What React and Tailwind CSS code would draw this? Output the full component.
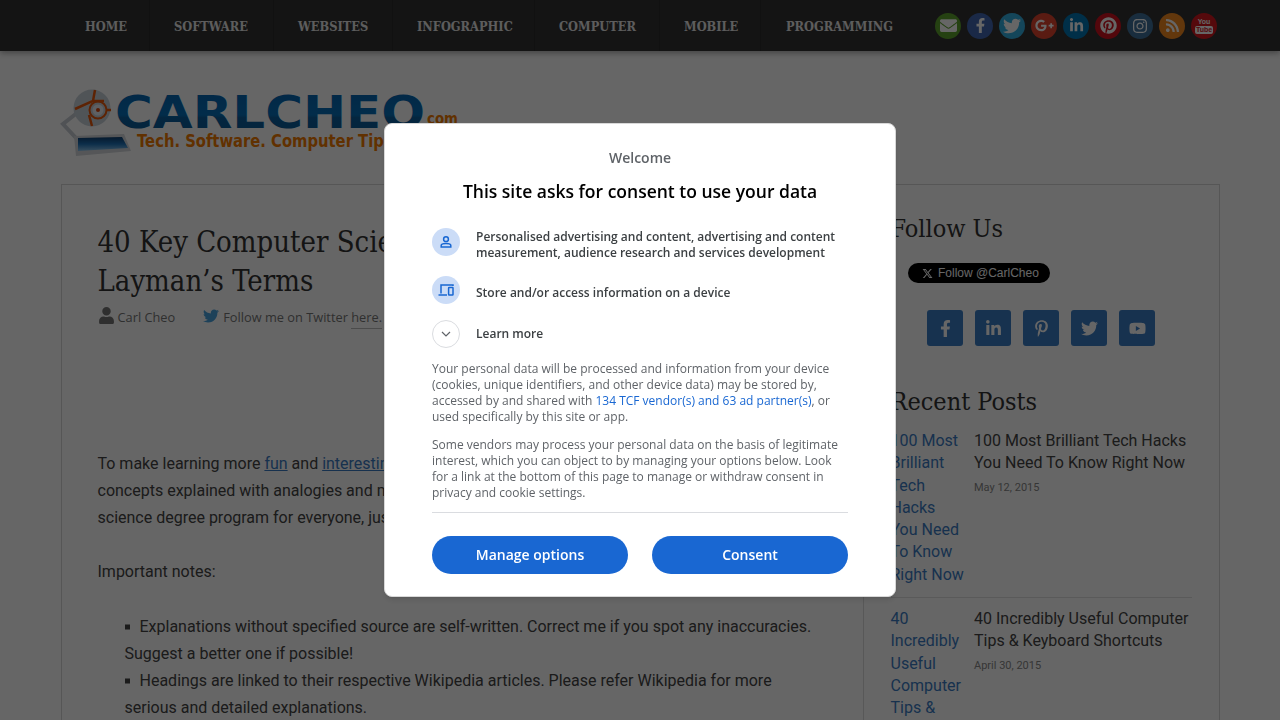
import {
  FaEnvelope,
  FaFacebookF,
  FaGooglePlusG,
  FaInstagram,
  FaLinkedinIn,
  FaPinterest,
  FaPinterestP,
  FaRss,
  FaTwitter,
  FaUser,
  FaYoutube,
} from 'react-icons/fa';
import { FaXTwitter } from 'react-icons/fa6';

const navItems = [
  { label: 'HOME', cls: 'w-[90px] pl-[25px]' },
  { label: 'SOFTWARE', cls: 'w-[124px] pl-[24px]' },
  { label: 'WEBSITES', cls: 'w-[119px] pl-[24px]' },
  { label: 'INFOGRAPHIC', cls: 'w-[142px] pl-[24px]' },
  { label: 'COMPUTER', cls: 'w-[125px] pl-[24px]' },
  { label: 'MOBILE', cls: 'w-[101px] pl-[24px]' },
  { label: 'PROGRAMMING', cls: 'w-[155px] pl-[25px] border-r-0' },
];

function YoutubeMark() {
  return (
    <span className="flex flex-col items-center font-['Liberation_Sans',sans-serif] text-[7px] leading-[8px] font-bold">
      You
      <span className="rounded-[2px] bg-white px-[1px] text-[#d4181e]">Tube</span>
    </span>
  );
}

const topSocial = [
  { icon: <FaEnvelope className="size-[17px]" />, bg: 'bg-[#5ea32e]' },
  { icon: <FaFacebookF className="size-[15px]" />, bg: 'bg-[#4267b2]' },
  { icon: <FaTwitter className="size-[18px]" />, bg: 'bg-[#33aee0]' },
  { icon: <FaGooglePlusG className="size-[19px]" />, bg: 'bg-[#e0442f]' },
  { icon: <FaLinkedinIn className="size-[15px]" />, bg: 'bg-[#0077b5]' },
  { icon: <FaPinterest className="size-[17px]" />, bg: 'bg-[#d0121f]' },
  { icon: <FaInstagram className="size-[16px]" />, bg: 'bg-[#3f729b]' },
  { icon: <FaRss className="size-[15px]" />, bg: 'bg-[#f58a1f]' },
  { icon: <YoutubeMark />, bg: 'bg-[#d4181e]' },
];

const sideSocial = [FaFacebookF, FaLinkedinIn, FaPinterestP, FaTwitter, FaYoutube];

const posts = [
  { title: '100 Most Brilliant Tech Hacks You Need To Know Right Now', date: 'May 12, 2015' },
  { title: '40 Incredibly Useful Computer Tips & Keyboard Shortcuts', date: 'April 30, 2015' },
];

const slab = "font-['DejaVu_Serif_Condensed','DejaVu_Serif',serif]";

function Logo() {
  return (
    <svg width="400" height="76" viewBox="0 0 400 76" className="block">
      <defs>
        <linearGradient id="logoBlue" x1="0" y1="0" x2="0" y2="1">
          <stop offset="0" stopColor="#0561ad" />
          <stop offset="0.55" stopColor="#0670ba" />
          <stop offset="0.6" stopColor="#0b5f9e" />
          <stop offset="1" stopColor="#0b5a96" />
        </linearGradient>
        <linearGradient id="logoScreen" x1="0" y1="0" x2="0" y2="1">
          <stop offset="0" stopColor="#0f3f70" />
          <stop offset="0.5" stopColor="#1f73b8" />
          <stop offset="1" stopColor="#8cc4ee" />
        </linearGradient>
      </defs>
      {/* robot eye arm and monitor */}
      <path d="M17 32 L3 43 L16 57" fill="none" stroke="#c8ced4" strokeWidth="4" />
      <path d="M14 55 L64 53 L71 70 L16 75 Z" fill="#d4d8dc" />
      <path d="M18 57 L62 56 L68 67 L18 70 Z" fill="url(#logoScreen)" />
      <circle cx="32" cy="27" r="18.5" fill="#c9d2da" />
      <path d="M35 9 L33 20 L15 28 M44 20 L33 20 M29 34 L32 45 M47 29 L51 29" stroke="#e8590c" strokeWidth="2.5" fill="none" />
      <circle cx="38" cy="29" r="8.5" fill="none" stroke="#e8590c" strokeWidth="2" />
      <circle cx="38" cy="29" r="5.5" fill="#eef1f4" />
      <circle cx="38" cy="29" r="2" fill="#d9480f" />
      {/* wordmark */}
      <text
        x="55"
        y="47"
        textLength="310"
        lengthAdjust="spacingAndGlyphs"
        fontFamily="DejaVu Sans"
        fontWeight="700"
        fontSize="44"
        fill="url(#logoBlue)"
      >
        CARLCHEO
      </text>
      <text
        x="367"
        y="43"
        textLength="31"
        lengthAdjust="spacingAndGlyphs"
        fontFamily="DejaVu Sans"
        fontWeight="700"
        fontSize="15"
        fill="#f27a00"
      >
        com
      </text>
      <text
        x="77"
        y="66"
        textLength="316"
        lengthAdjust="spacingAndGlyphs"
        fontFamily="DejaVu Sans"
        fontWeight="700"
        fontSize="17.5"
        fill="#f27a00"
      >
        Tech. Software. Computer Tips. Hacks
      </text>
    </svg>
  );
}

function ConsentDialog() {
  return (
    <div className="fixed inset-0 flex items-center justify-center bg-black/60">
      <div className="w-[512px] h-[474px] rounded-lg border border-[#d8d8d8] bg-white px-[47px] pt-[24px] font-['Open_Sans',sans-serif] shadow-md">
        <p className="text-center text-sm leading-5 font-semibold text-[#5f6368]">Welcome</p>
        <h2 className="mt-[11px] text-center text-[17.5px] leading-6 font-semibold text-[#000]">
          This site asks for consent to use your data
        </h2>

        <div className="mt-[25px] flex items-start gap-4">
          <span className="flex size-7 shrink-0 items-center justify-center rounded-full bg-[#cbdcf7]">
            <svg width="16" height="16" viewBox="0 0 16 16" fill="none" stroke="#1967d2" strokeWidth="1.5">
              <circle cx="8" cy="5.2" r="2.4" />
              <path d="M3.2 13 V11.6 C3.2 10.2 5.4 9.5 8 9.5 C10.6 9.5 12.8 10.2 12.8 11.6 V13 Z" />
            </svg>
          </span>
          <p className="w-[370px] pt-[1px] text-xs leading-4 font-semibold text-[#3c4043]">
            Personalised advertising and content, advertising and content measurement, audience research and services development
          </p>
        </div>

        <div className="mt-[15px] flex items-center gap-4">
          <span className="flex size-7 shrink-0 items-center justify-center rounded-full bg-[#cbdcf7]">
            <svg width="16" height="16" viewBox="0 0 16 16" fill="none" stroke="#1967d2" strokeWidth="1.5">
              <path d="M3 11.5 V3 H15 V4" />
              <path d="M0.5 13 H9" />
              <rect x="10.6" y="5.5" width="4.4" height="7.5" rx="0.5" />
            </svg>
          </span>
          <p className="pt-[6px] text-xs leading-4 font-semibold text-[#3c4043]">Store and/or access information on a device</p>
        </div>

        <div className="mt-[16px] flex items-center gap-4">
          <span className="flex size-7 shrink-0 items-center justify-center rounded-full border border-[#dadce0] bg-white">
            <svg width="10" height="6" viewBox="0 0 10 6" fill="none" stroke="#5f6368" strokeWidth="1.2">
              <path d="M1 1 L5 5 L9 1" />
            </svg>
          </span>
          <p className="text-xs leading-4 font-semibold text-[#3c4043]">Learn more</p>
        </div>

        <p className="mt-[13px] text-xs leading-4 text-[#5f6368]">
          Your personal data will be processed and information from your device (cookies, unique identifiers, and other device data) may be stored by, accessed by and shared with{' '}
          <span className="text-[#1967d2]">134 TCF vendor(s) and 63 ad partner(s)</span>, or used specifically by this site or app.
        </p>
        <p className="mt-[12px] text-xs leading-4 text-[#5f6368]">
          Some vendors may process your personal data on the basis of legitimate interest, which you can object to by managing your options below. Look for a link at the bottom of this page to manage or withdraw consent in privacy and cookie settings.
        </p>

        <div className="mt-[11px] border-t border-[#dadce0]" />

        <div className="mt-[23px] flex gap-6">
          <button type="button" className="h-[38px] flex-1 rounded-full bg-[#1967d2] text-sm font-semibold text-white">
            Manage options
          </button>
          <button type="button" className="h-[38px] flex-1 rounded-full bg-[#1967d2] text-sm font-semibold text-white">
            Consent
          </button>
        </div>
      </div>
    </div>
  );
}

function Article() {
  return (
    <main className="w-[801px] shrink-0 pr-[36px] pl-[35.5px] pt-[37.5px] font-['Roboto',sans-serif] text-base leading-[27px] text-[#444]">
      <h1 className={`${slab} text-[29px] leading-[39px] font-normal text-[#333]`}>
        40 Key Computer Science Terms Explained in
        <br />
        Layman’s Terms
      </h1>
      <div className="mt-[6.5px] flex h-[20px] items-center font-['Open_Sans',sans-serif] text-[12.8px] text-[#777]">
        <FaUser className="mr-[3px] mb-[4px] size-[17px] text-[#777]" />
        <span>Carl Cheo</span>
        <FaTwitter className="mr-[4px] mb-[3px] ml-[28px] size-4 text-[#4aa3df]" />
        <span>
          Follow me on Twitter <span className="border-b border-[#bbb] pb-[2px]">here.</span>
        </span>
      </div>

      <p className="mt-[123px]">
        To make learning more <a className="text-[#3b7cc4] underline">fun</a> and{' '}
        <a className="text-[#3b7cc4] underline">interesting</a>, here’s a list of important computer science theories and
        <br />
        concepts explained with analogies and minimal technical terms. It’s like a crash course on computer
        <br />
        science degree program for everyone, just for fun and better understanding.
      </p>
      <p className="mt-[27px]">Important notes:</p>
      <ul className="mt-[28px] pl-[27px]">
        <li>
          <span className="mr-[10px] inline-block size-[5px] -translate-y-[2.5px] bg-[#444]" />
          Explanations without specified source are self-written. Correct me if you spot any inaccuracies.
          <br />
          Suggest a better one if possible!
        </li>
        <li>
          <span className="mr-[10px] inline-block size-[5px] -translate-y-[2.5px] bg-[#444]" />
          Headings are linked to their respective Wikipedia articles. Please refer Wikipedia for more
          <br />
          serious and detailed explanations.
        </li>
      </ul>
    </main>
  );
}

function Sidebar() {
  return (
    <aside className="flex-1 border-l border-[#ddd] pt-[26px] pl-[26.5px] font-['Roboto',sans-serif] text-[#444]">
      <h3 className={`${slab} text-[25px] leading-[36px] font-normal text-[#333]`}>Follow Us</h3>
      <div className="mt-[16px] ml-[17.5px] flex h-5 w-[142px] items-center gap-[5px] rounded-full bg-black pl-[14px] font-['Liberation_Sans',sans-serif] text-[12px] text-white">
        <FaXTwitter className="size-[11px]" />
        Follow @CarlCheo
      </div>
      <div className="mt-[27px] ml-[36.5px] flex gap-3">
        {sideSocial.map((Icon, i) => (
          <span key={i} className="flex size-9 items-center justify-center rounded-[3px] bg-[#3a7dc5] text-white">
            <Icon className="size-[17px]" />
          </span>
        ))}
      </div>

      <h3 className={`${slab} mt-[38px] text-[25px] leading-[36px] font-normal text-[#333]`}>Recent Posts</h3>
      <div className="mt-[10px] w-[301px]">
        {posts.map((post) => (
          <div key={post.date} className="mb-[10px] flex border-b border-[#e2e2e2] pb-[11px]">
            <a className="w-[83.5px] shrink-0 pr-[9px] text-base leading-[22.3px] text-[#3b7cc4]">{post.title}</a>
            <div>
              <p className="text-base leading-[22.3px] text-[#444]">{post.title}</p>
              <p className="mt-[5px] text-[11px] leading-4 text-[#888]">{post.date}</p>
            </div>
          </div>
        ))}
      </div>
    </aside>
  );
}

export default function App() {
  return (
    <div className="h-[720px] overflow-hidden bg-white">
      <header className="relative flex h-[51px] items-center bg-[#333] pl-[60px] shadow-[0_2px_6px_rgba(0,0,0,0.35)]">
        <nav className={`${slab} flex h-full`}>
          {navItems.map((item) => (
            <a key={item.label} className={`flex h-full items-center border-r border-[#2c2c2c] pt-[2px] text-[12.7px] font-bold text-[#e8e8e8] ${item.cls}`}>
              {item.label}
            </a>
          ))}
        </nav>
        <div className="ml-[19px] flex gap-[6px]">
          {topSocial.map(({ icon, bg }, i) => (
            <span key={i} className={`flex size-[26px] items-center justify-center rounded-full text-white ${bg}`}>
              {icon}
            </span>
          ))}
        </div>
      </header>

      <div className="ml-[60px] pt-[30px]">
        <Logo />
      </div>

      <div className="mx-[61px] mt-[27px] flex w-[1159px] border border-[#d8d8d8]">
        <Article />
        <Sidebar />
      </div>

      <ConsentDialog />
    </div>
  );
}
